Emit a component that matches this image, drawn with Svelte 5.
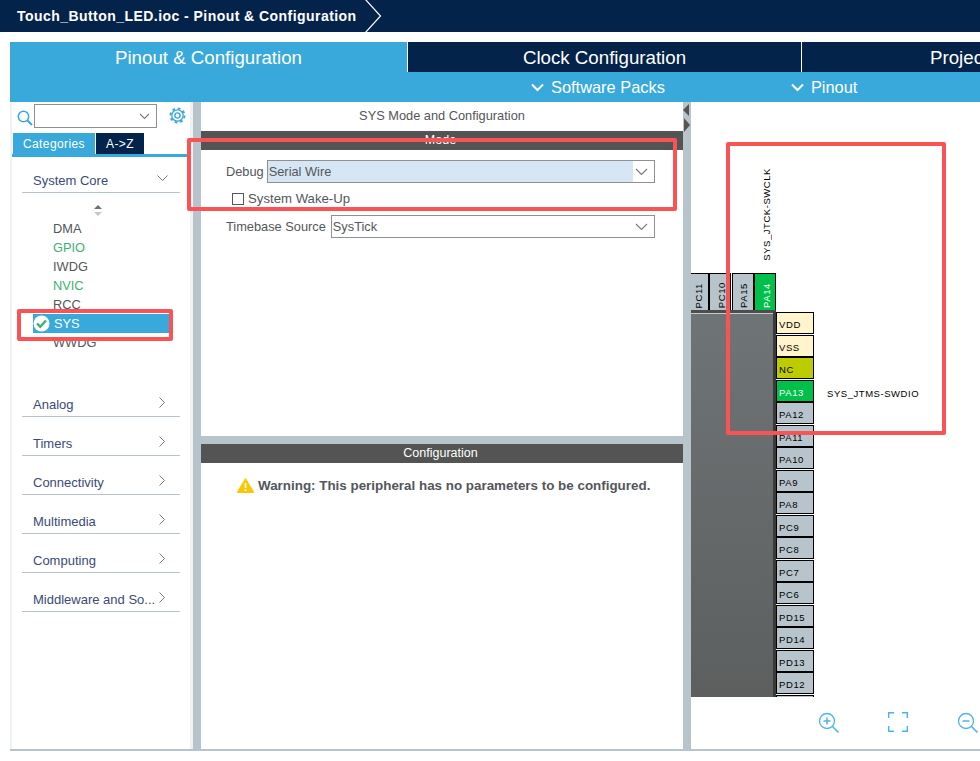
<script>
  const coreItems = [
    { name: "DMA" },
    { name: "GPIO", on: true },
    { name: "IWDG" },
    { name: "NVIC", on: true },
    { name: "RCC" },
    { name: "SYS", selected: true },
    { name: "WWDG" },
  ];
  const groups = ["Analog", "Timers", "Connectivity", "Multimedia", "Computing", "Middleware and So..."];
  const topPins = [
    { name: "PC11" },
    { name: "PC10" },
    { name: "PA15" },
    { name: "PA14", kind: "green" },
  ];
  const sidePins = [
    { name: "VDD", kind: "power" },
    { name: "VSS", kind: "power" },
    { name: "NC", kind: "nc" },
    { name: "PA13", kind: "green" },
    ...["PA12", "PA11", "PA10", "PA9", "PA8", "PC9", "PC8", "PC7", "PC6", "PD15", "PD14", "PD13", "PD12", ""].map((name) => ({ name })),
  ];
</script>

<div class="app">
  <header class="title">
    <span>Touch_Button_LED.ioc - Pinout &amp; Configuration</span>
    <svg class="crumb" width="20" height="32" viewBox="0 0 20 32"><path d="M1 -1 L16.500 16 L1 33" fill="none" stroke="#fff" stroke-width="1.200" /></svg>
  </header>

  <nav class="tabs">
    <div class="tab active">Pinout &amp; Configuration</div>
    <div class="tab clock">Clock Configuration</div>
    <div class="tab project">Project Manager</div>
  </nav>
  <div class="subbar">
    <div class="sub packs">
      <svg width="13" height="9" viewBox="0 0 13 9"><path d="M1 1.500 L6.500 7 L12 1.500" fill="none" stroke="#fff" stroke-width="2" /></svg>
      Software Packs
    </div>
    <div class="sub pinout">
      <svg width="13" height="9" viewBox="0 0 13 9"><path d="M1 1.500 L6.500 7 L12 1.500" fill="none" stroke="#fff" stroke-width="2" /></svg>
      Pinout
    </div>
  </div>

  <main class="main">
    <aside class="sidebar">
      <div class="search">
        <svg width="16" height="16" viewBox="0 0 16 16"><circle cx="6.500" cy="6.500" r="5.200" fill="none" stroke="#39a9dc" stroke-width="1.500" /><path d="M10.500 10.500 L15 15" stroke="#39a9dc" stroke-width="2" /></svg>
        <div class="search-box">
          <svg width="11" height="7" viewBox="0 0 11 7"><path d="M1 1 L5.500 5.500 L10 1" fill="none" stroke="#77797c" stroke-width="1.100" /></svg>
        </div>
        <svg class="gear" width="17" height="17" viewBox="0 0 17 17">
          <circle cx="8.500" cy="8.500" r="2.600" fill="none" stroke="#39a9dc" stroke-width="1.400" />
          <circle cx="8.500" cy="8.500" r="5.700" fill="none" stroke="#39a9dc" stroke-width="1.300" />
          <circle cx="8.500" cy="8.500" r="7" fill="none" stroke="#39a9dc" stroke-width="2" stroke-dasharray="2.700 2.800" />
        </svg>
      </div>

      <div class="cat-tabs">
        <span class="cat on">Categories</span>
        <span class="cat az">A-&gt;Z</span>
      </div>

      <div class="tree">
        <div class="group open">
          <span>System Core</span>
          <svg width="11" height="7" viewBox="0 0 11 7"><path d="M0.500 0.500 L5.500 5.500 L10.500 0.500" fill="none" stroke="#77797c" stroke-width="1" /></svg>
        </div>
        <div class="sorter">
          <svg width="8" height="11" viewBox="0 0 8 11"><path d="M4 0 L8 4 H0 Z" fill="#6d6f72" /><path d="M4 11 L8 7 H0 Z" fill="#c4c8cc" /></svg>
        </div>
        <ul class="items">
          {#each coreItems as item}
            <li class:on={item.on} class:selected={item.selected}>
              {#if item.selected}
                <svg class="check" width="17" height="17" viewBox="0 0 17 17"><circle cx="8.500" cy="8.500" r="8" fill="#fff" /><path d="M4 8.500 L7.200 11.700 L13 5.500" fill="none" stroke="#3cb371" stroke-width="2.400" /></svg>
              {/if}
              <span>{item.name}</span>
            </li>
          {/each}
        </ul>
        {#each groups as group}
          <div class="group closed">
            <span>{group}</span>
            <svg width="7" height="11" viewBox="0 0 7 11"><path d="M0.500 0.500 L5.500 5.500 L0.500 10.500" fill="none" stroke="#77797c" stroke-width="1" /></svg>
          </div>
        {/each}
      </div>
    </aside>

    <div class="splitter"></div>

    <section class="center">
      <div class="mode">
        <h2>SYS Mode and Configuration</h2>
        <div class="bar">Mode</div>
        <div class="row debug">
          <label for="debug">Debug</label>
          <div id="debug" class="select filled">
            <span class="value">Serial Wire</span>
            <svg width="13" height="8" viewBox="0 0 13 8"><path d="M1 1 L6.500 6.500 L12 1" fill="none" stroke="#77797c" stroke-width="1.100" /></svg>
          </div>
        </div>
        <div class="wake"><i class="box"></i>System Wake-Up</div>
        <div class="row time">
          <label for="timebase">Timebase Source</label>
          <div id="timebase" class="select">
            <span class="value">SysTick</span>
            <svg width="13" height="8" viewBox="0 0 13 8"><path d="M1 1 L6.500 6.500 L12 1" fill="none" stroke="#77797c" stroke-width="1.100" /></svg>
          </div>
        </div>
      </div>
      <div class="hsplit"></div>
      <div class="config">
        <div class="bar">Configuration</div>
        <p class="warning">
          <svg width="17" height="15" viewBox="0 0 17 15"><path d="M8.500 0.500 L16.800 14.500 H0.200 Z" fill="#fbc700" stroke="#fbc700" stroke-linejoin="round" /><path d="M8.500 5 V10" stroke="#fff" stroke-width="1.600" /><path d="M8.500 11.300 V13" stroke="#fff" stroke-width="1.600" /></svg>
          <b>Warning: This peripheral has no parameters to be configured.</b>
        </p>
      </div>
    </section>

    <div class="splitter side">
      <svg width="8" height="30" viewBox="0 0 8 30">
        <path d="M6 1 V13 L0 7 Z" fill="#535453" />
        <path d="M1 15 V29 L7 22 Z" fill="#535453" />
      </svg>
    </div>

    <section class="canvas">
      <span class="signal vertical">SYS_JTCK-SWCLK</span>
      <span class="signal horizontal">SYS_JTMS-SWDIO</span>

      <div class="top-pins">
        {#each topPins as pin}
          <div class="pin top {pin.kind ?? ''}"><span>{pin.name}</span></div>
        {/each}
      </div>
      <div class="chip"></div>
      <div class="side-pins">
        {#each sidePins as pin}
          <div class="pin right {pin.kind ?? ''}">{pin.name}</div>
        {/each}
      </div>

      <svg class="tool zoom-in" width="22" height="22" viewBox="0 0 22 22">
        <circle cx="9" cy="9" r="7.500" fill="none" stroke="#4db3e6" stroke-width="1.300" />
        <path d="M14.500 14.500 L20.500 20.500" stroke="#4db3e6" stroke-width="1.600" />
        <path d="M5.500 9 H12.500 M9 5.500 V12.500" stroke="#4db3e6" stroke-width="1.500" />
      </svg>
      <svg class="tool fit" width="20" height="20" viewBox="0 0 20 20">
        <path d="M0.700 6 V0.700 H6 M14 0.700 H19.300 V6 M19.300 14 V19.300 H14 M6 19.300 H0.700 V14" fill="none" stroke="#4db3e6" stroke-width="1.400" />
      </svg>
      <svg class="tool zoom-out" width="22" height="22" viewBox="0 0 22 22">
        <circle cx="9" cy="9" r="7.500" fill="none" stroke="#4db3e6" stroke-width="1.300" />
        <path d="M14.500 14.500 L20.500 20.500" stroke="#4db3e6" stroke-width="1.600" />
        <path d="M5.500 9 H12.500" stroke="#4db3e6" stroke-width="1.500" />
      </svg>
    </section>
  </main>
  <div class="baseline"></div>

  <div class="mark mark-mode"></div>
  <div class="mark mark-sys"></div>
  <div class="mark mark-pins"></div>
</div>

<style>
  :global(body) {
    margin: 0;
    background: #fff;
  }

  .app {
    position: relative;
    width: 980px;
    height: 761px;
    overflow: hidden;
    font-family: "Liberation Sans", Arial, sans-serif;
    font-size: 12.8px;
    color: #54565a;
  }

  .title {
    height: 32px;
    background: #03234b;
    color: #fff;
    display: flex;
    align-items: center;
    padding-left: 17px;
    font-size: 14px;
    font-weight: bold;
    letter-spacing: 0.45px;
  }
  .crumb {
    margin-left: 7px;
    flex: none;
  }

  .tabs {
    margin: 10px 0 0 10px;
    height: 30px;
    display: flex;
    font-size: 18.7px;
    color: #fff;
    background: #39a9dc;
  }
  .tab {
    padding-top: 5px;
    text-align: center;
    box-sizing: border-box;
    white-space: nowrap;
    flex: none;
  }
  .active {
    width: 397px;
    background: #39a9dc;
  }
  .clock {
    width: 395px;
    background: #03234b;
    border-left: 1px solid #fff;
    border-right: 1px solid #fff;
  }
  .project {
    width: 178px;
    overflow: hidden;
    background: #03234b;
    text-align: left;
    padding-left: 128px;
  }

  .subbar {
    margin-left: 10px;
    height: 30px;
    background: #39a9dc;
    color: #fff;
    font-size: 16.4px;
    display: flex;
    align-items: center;
  }
  .sub {
    display: flex;
    align-items: center;
    gap: 7px;
  }
  .packs {
    margin-left: 521px;
  }
  .pinout {
    margin-left: 126px;
  }

  .main {
    margin-left: 10px;
    height: 647px;
    display: flex;
  }

  .sidebar {
    width: 183px;
    flex: none;
    box-sizing: border-box;
    border-left: 2px solid #f0f1f2;
    border-right: 3px solid #f0f1f2;
  }
  .search {
    height: 31px;
    display: flex;
    align-items: flex-start;
    padding-left: 5px;
    box-sizing: border-box;
  }
  .search > svg:first-child {
    margin-top: 8px;
  }
  .search-box {
    width: 115px;
    height: 22px;
    margin: 2px 0 0 1px;
    border: 1px solid #8e9093;
    display: flex;
    align-items: center;
    justify-content: flex-end;
    padding-right: 6px;
  }
  .gear {
    margin: 5px 0 0 12px;
  }

  .cat-tabs {
    display: flex;
    gap: 1px;
    height: 21px;
    padding-left: 1px;
    font-size: 12px;
    letter-spacing: 0.4px;
    color: #fff;
  }
  .cat {
    display: flex;
    align-items: center;
    justify-content: center;
  }
  .cat.on {
    width: 82px;
    background: #39a9dc;
  }
  .cat.az {
    width: 48px;
    background: #03234b;
  }

  .tree {
    border-top: 3px solid #39a9dc;
    padding: 0 10px;
  }
  .group {
    display: flex;
    justify-content: space-between;
    align-items: center;
    border-bottom: 1px solid #b8c4cb;
    padding: 0 12px 0 11px;
    color: #3c4a78;
    font-size: 13px;
    box-sizing: border-box;
    white-space: nowrap;
  }
  .group.open {
    height: 36px;
    padding-top: 13px;
    padding-bottom: 1px;
  }
  .group.closed {
    height: 24px;
    margin-top: 15px;
    padding-right: 14px;
  }
  .group.closed svg {
    margin-bottom: 5px;
  }
  .group.open svg {
    margin-bottom: 4px;
  }

  .sorter {
    height: 23px;
    display: flex;
    justify-content: center;
    align-items: flex-end;
    padding-right: 6px;
    box-sizing: border-box;
    margin-bottom: 3px;
  }
  .items {
    list-style: none;
    margin: 0 0 41px 0;
    padding: 0;
  }
  .items li {
    height: 19px;
    line-height: 19px;
    padding-left: 31px;
    color: #54565a;
    position: relative;
  }
  .items li.on {
    color: #3cb371;
  }
  .items li.selected {
    margin-left: 11px;
    margin-right: 11px;
    padding-left: 21px;
    background: #39a9dc;
    color: #fff;
  }
  .check {
    position: absolute;
    left: 0;
    top: 1px;
  }

  .splitter {
    width: 8px;
    flex: none;
    background: #b8c4cb;
  }
  .splitter.side svg {
    display: block;
    margin-top: 1px;
  }

  .center {
    width: 482px;
    flex: none;
    display: flex;
    flex-direction: column;
  }
  .mode {
    height: 334px;
    flex: none;
  }
  .mode h2 {
    margin: 0;
    height: 29px;
    line-height: 28px;
    text-align: center;
    font-size: 12.8px;
    font-weight: normal;
  }
  .bar {
    height: 19px;
    line-height: 19px;
    background: #535453;
    color: #fff;
    text-align: center;
    font-size: 12.5px;
    padding-right: 3px;
  }
  .row {
    display: flex;
    align-items: center;
    padding-left: 25px;
  }
  .row.debug {
    margin-top: 10px;
    gap: 3px;
  }
  .row.time {
    margin-top: 9px;
    gap: 5px;
  }
  .select {
    height: 23px;
    box-sizing: border-box;
    border: 1px solid #8e9093;
    display: flex;
    align-items: center;
    justify-content: space-between;
    padding-right: 6px;
  }
  #debug {
    width: 388px;
  }
  #timebase {
    width: 324px;
  }
  .value {
    padding-left: 1px;
    align-self: stretch;
    display: flex;
    align-items: center;
  }
  .filled .value {
    width: 364px;
    background: #d6e6f4;
  }
  .wake {
    margin: 9px 0 0 31px;
    height: 14px;
    line-height: 14px;
    display: flex;
    align-items: center;
    gap: 4px;
    font-size: 13.2px;
  }
  .box {
    width: 12px;
    height: 12px;
    box-sizing: border-box;
    border: 1px solid #54565a;
  }

  .hsplit {
    height: 8px;
    flex: none;
    background: #b8c4cb;
  }
  .warning {
    margin: 14px 0 0 36px;
    display: flex;
    align-items: center;
    gap: 4px;
    font-size: 13.4px;
    height: 16px;
    white-space: nowrap;
  }

  .canvas {
    position: relative;
    flex: 1;
    overflow: hidden;
  }
  .signal {
    position: absolute;
    color: #000;
    font-size: 9.5px;
    letter-spacing: 0.55px;
    white-space: nowrap;
  }
  .vertical {
    left: 70px;
    top: 66px;
    writing-mode: vertical-rl;
    transform: rotate(180deg);
  }
  .horizontal {
    left: 136px;
    top: 286px;
  }

  .top-pins {
    position: absolute;
    left: 0;
    top: 171px;
    width: 85px;
    height: 37px;
    display: flex;
    justify-content: flex-end;
    gap: 0.5px;
    overflow: hidden;
  }
  .chip {
    position: absolute;
    left: 0;
    top: 208px;
    width: 85px;
    height: 387px;
    box-sizing: border-box;
    background: linear-gradient(#6f7476, #5d5f5f);
    border-top: 3px solid #4b4d4e;
    border-right: 3px solid #3a3a3a;
    box-shadow: inset 0 1px 0 #c8cccc;
  }
  .side-pins {
    position: absolute;
    left: 85px;
    top: 210px;
    width: 38px;
    height: 385px;
    overflow: hidden;
    display: flex;
    flex-direction: column;
    gap: 0.5px;
  }
  .pin {
    box-sizing: border-box;
    border: 1px solid #000;
    background: #b8c4cb;
    color: #000;
    font-size: 9.5px;
    letter-spacing: 0.6px;
    flex: none;
  }
  .pin.top {
    width: 22px;
    height: 38px;
    display: flex;
    align-items: flex-end;
    justify-content: center;
    padding: 0 0 2px 2px;
  }
  .pin.top span {
    writing-mode: vertical-rl;
    transform: rotate(180deg);
  }
  .pin.right {
    height: 22px;
    line-height: 24px;
    padding-left: 2px;
    white-space: nowrap;
  }
  .pin.power {
    background: #fff4cc;
  }
  .pin.nc {
    background: #bdcc00;
  }
  .pin.green {
    background: #00c04b;
    color: #fff;
  }

  .tool {
    position: absolute;
    top: 610px;
  }
  .zoom-in {
    left: 127px;
  }
  .fit {
    left: 197px;
  }
  .zoom-out {
    left: 266px;
  }

  .baseline {
    margin-left: 10px;
    height: 2px;
    background: #b8c4cb;
  }

  /* the red boxes someone drew over the screenshot */
  .mark {
    position: absolute;
    box-sizing: border-box;
    border: 4px solid #f95355;
    border-radius: 2px;
  }
  .mark-mode {
    left: 187px;
    top: 138px;
    width: 490px;
    height: 73px;
  }
  .mark-sys {
    left: 17px;
    top: 309px;
    width: 156px;
    height: 32px;
  }
  .mark-pins {
    left: 726px;
    top: 142px;
    width: 220px;
    height: 293px;
  }
</style>
